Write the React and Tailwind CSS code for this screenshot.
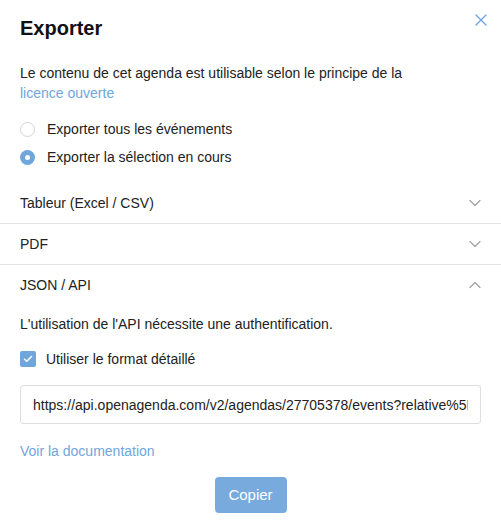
import React, { useState } from 'react';

const blue = '#6fa6dc';

function Chevron({ up }) {
    return (
        <svg width="12" height="8" viewBox="0 0 12 8" fill="none" stroke="#a3a3a3" strokeWidth="1.3" strokeLinecap="round" strokeLinejoin="round">
            {up ? <path d="M1 6.5 L6 1.5 L11 6.5" /> : <path d="M1 1.5 L6 6.5 L11 1.5" />}
        </svg>
    );
}

function Section({ title, open, children }) {
    return (
        <div className="border-b border-[#e3e3e3] last:border-b-0">
            <div className="flex items-center justify-between pl-5 pr-[20px] h-[40px]">
                <span>{title}</span>
                <Chevron up={open} />
            </div>
            {open && children}
        </div>
    );
}

export default function App() {
    const [mode, setMode] = useState('selection');

    return (
        <div className="relative w-[501px] h-[521px] bg-white text-[14px] leading-5 text-[#222]" style={{ fontFamily: '"Liberation Sans", Arial, sans-serif' }}>
            {/* fermer */}
            <button className="absolute right-[14px] top-[14px] p-0">
                <svg width="12" height="12" viewBox="0 0 12 12" stroke={blue} strokeWidth="1.4" strokeLinecap="round">
                    <path d="M1 1 L11 11 M11 1 L1 11" />
                </svg>
            </button>

            <div className="px-5 pt-[14px]">
                <h2 className="text-[20px] leading-7 font-bold text-[#111]">Exporter</h2>

                <p className="mt-[21px]">
                    Le contenu de cet agenda est utilisable selon le principe de la
                    <a className="block text-[#6fa6dc]">licence ouverte</a>
                </p>

                <div className="mt-4 flex flex-col gap-2">
                    <label className="flex items-center gap-3 cursor-pointer" onClick={() => setMode('all')}>
                        <span className={mode === 'all'
                            ? 'w-[15px] h-[15px] rounded-full bg-[#6fa6dc] flex items-center justify-center'
                            : 'w-[15px] h-[15px] rounded-full border border-[#d4d4d4] bg-white'}>
                            {mode === 'all' && <span className="w-[5px] h-[5px] rounded-full bg-white" />}
                        </span>
                        <span>Exporter tous les événements</span>
                    </label>
                    <label className="flex items-center gap-3 cursor-pointer" onClick={() => setMode('selection')}>
                        <span className={mode === 'selection'
                            ? 'w-[15px] h-[15px] rounded-full bg-[#6fa6dc] flex items-center justify-center'
                            : 'w-[15px] h-[15px] rounded-full border border-[#d4d4d4] bg-white'}>
                            {mode === 'selection' && <span className="w-[5px] h-[5px] rounded-full bg-white" />}
                        </span>
                        <span>Exporter la sélection en cours</span>
                    </label>
                </div>
            </div>

            <div className="mt-[16px]">
                <Section title="Tableur (Excel / CSV)" />
                <Section title="PDF" />
                <Section title="JSON / API" open>
                    <div className="px-5 pt-[9px]">
                        <p>L'utilisation de l'API nécessite une authentification.</p>

                        <label className="mt-[15px] flex items-center gap-[10px]">
                            <span className="w-4 h-4 rounded-[2px] bg-[#6fa6dc] flex items-center justify-center">
                                <svg width="10" height="8" viewBox="0 0 10 8" fill="none" stroke="white" strokeWidth="1.5" strokeLinecap="round" strokeLinejoin="round">
                                    <path d="M1.5 4.2 L3.8 6.3 L8.5 1.5" />
                                </svg>
                            </span>
                            <span>Utiliser le format détaillé</span>
                        </label>

                        <div className="mt-[16px] h-[39px] border border-[#dedede] rounded-[3px] px-3 flex items-center overflow-hidden whitespace-nowrap">
                            <span className="overflow-hidden">https://api.openagenda.com/v2/agendas/27705378/events?relative%5B</span>
                        </div>

                        <a className="block mt-[17px] text-[#6fa6dc]">Voir la documentation</a>

                        <div className="mt-[16px] flex justify-center">
                            <button className="w-[72px] h-[36px] rounded-[4px] bg-[#78aade] text-white text-[15px]">Copier</button>
                        </div>
                    </div>
                </Section>
            </div>
        </div>
    );
}
